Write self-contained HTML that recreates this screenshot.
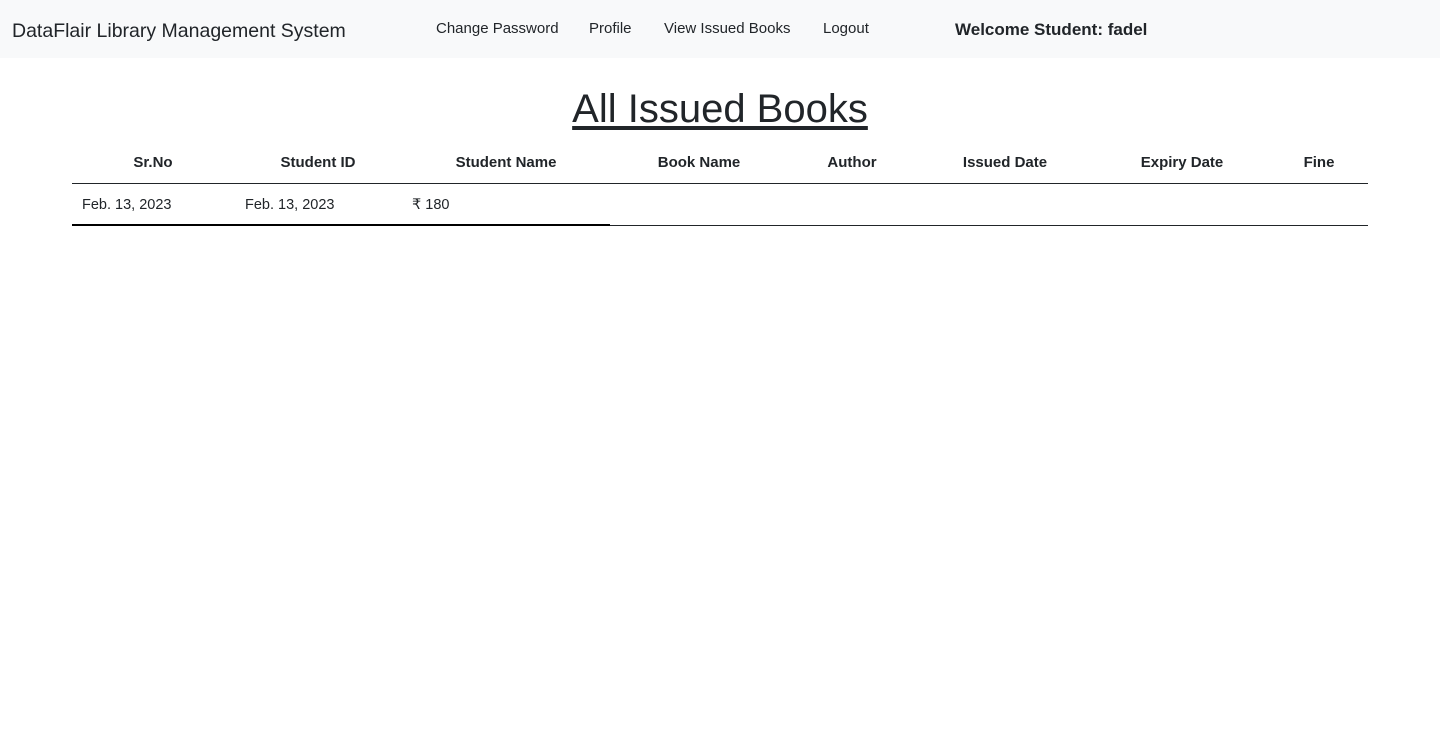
<!DOCTYPE html>
<html><head><meta charset="utf-8"><style>
body{margin:0;width:1440px;height:742px;background:#fff;font-family:"Liberation Sans",sans-serif;color:#212529;position:relative;overflow:hidden}
.a{position:absolute;white-space:nowrap;line-height:1}
.nav{position:absolute;left:0;top:0;width:1440px;height:58px;background:#f8f9fa}
.h{font-weight:bold;font-size:15px;transform:translateX(-50%);top:155px}
.c{font-size:14.5px;top:198px}
</style></head><body>
<div class="nav"></div>
<div class="a" style="left:12px;top:22px;font-size:19.5px">DataFlair Library Management System</div>
<div class="a" style="left:436px;top:21px;font-size:15px">Change Password</div>
<div class="a" style="left:589px;top:21px;font-size:15px">Profile</div>
<div class="a" style="left:664px;top:21px;font-size:15px">View Issued Books</div>
<div class="a" style="left:823px;top:21px;font-size:15px">Logout</div>
<div class="a" style="left:955px;top:21px;font-size:17px;font-weight:bold">Welcome Student: fadel</div>
<div class="a" style="left:720px;transform:translateX(-50%);top:89px;font-size:40px;text-decoration:underline;text-underline-offset:4px">All Issued Books</div>
<div class="a h" style="left:153px">Sr.No</div>
<div class="a h" style="left:318px">Student ID</div>
<div class="a h" style="left:506px">Student Name</div>
<div class="a h" style="left:699px">Book Name</div>
<div class="a h" style="left:852px">Author</div>
<div class="a h" style="left:1005px">Issued Date</div>
<div class="a h" style="left:1182px">Expiry Date</div>
<div class="a h" style="left:1319px">Fine</div>
<div style="position:absolute;left:72px;top:183px;width:1296px;height:1px;background:#212529"></div>
<div class="a c" style="left:82px">Feb. 13, 2023</div>
<div class="a c" style="left:245px">Feb. 13, 2023</div>
<div class="a c" style="left:412px">₹ 180</div>
<div style="position:absolute;left:72px;top:224px;width:538px;height:2px;background:#000"></div>
<div style="position:absolute;left:610px;top:225px;width:758px;height:1px;background:#212529"></div>
</body></html>
